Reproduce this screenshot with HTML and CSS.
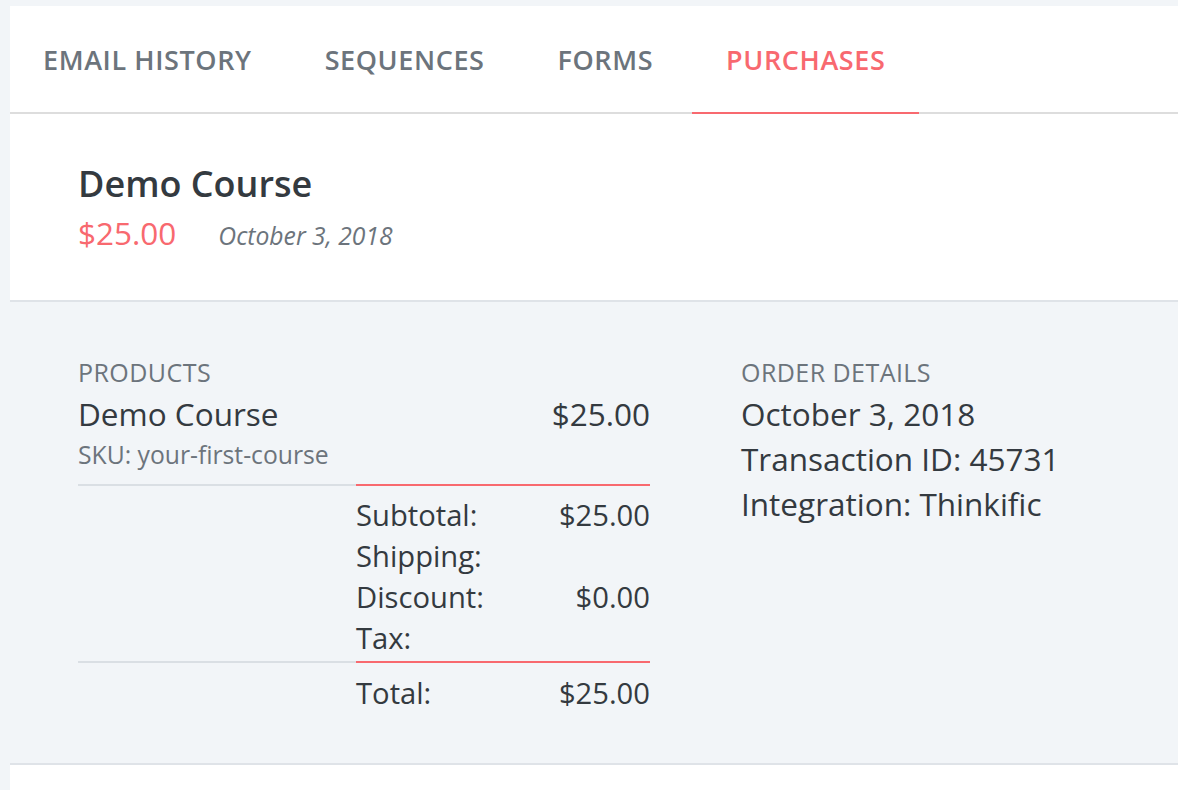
FILE: index.html
```html
<!DOCTYPE html>
<html lang="en">
<head>
<meta charset="utf-8">
<title>Purchases</title>
<link rel="stylesheet" href="styles.css">
</head>
<body>
<div class="page">
  <div class="card">
    <nav class="tabs">
      <a class="tab">EMAIL HISTORY</a>
      <a class="tab">SEQUENCES</a>
      <a class="tab">FORMS</a>
      <a class="tab active">PURCHASES</a>
    </nav>
    <header class="purchase-head">
      <h1 class="title">Demo Course</h1>
      <div class="meta">
        <span class="price">$25.00</span>
        <span class="date">October 3, 2018</span>
      </div>
    </header>
    <section class="details">
      <div class="products">
        <div class="label">PRODUCTS</div>
        <div class="product">
          <div class="product-row">
            <span class="product-name">Demo Course</span>
            <span class="product-price">$25.00</span>
          </div>
          <div class="sku">SKU: your-first-course</div>
        </div>
        <div class="summary">
          <div class="spacer"></div>
          <div class="sums">
            <div class="sum-row"><span>Subtotal:</span><span>$25.00</span></div>
            <div class="sum-row"><span>Shipping:</span><span></span></div>
            <div class="sum-row"><span>Discount:</span><span>$0.00</span></div>
            <div class="sum-row"><span>Tax:</span><span></span></div>
          </div>
        </div>
        <div class="summary total">
          <div class="spacer"></div>
          <div class="sums">
            <div class="sum-row"><span>Total:</span><span>$25.00</span></div>
          </div>
        </div>
      </div>
      <div class="order">
        <div class="label">ORDER DETAILS</div>
        <div class="order-line">October 3, 2018</div>
        <div class="order-line">Transaction ID: 45731</div>
        <div class="order-line">Integration: Thinkific</div>
      </div>
    </section>
    <div class="after"></div>
  </div>
</div>
</body>
</html>
```

FILE: styles.css
```css
html, body {
  margin: 0;
  padding: 0;
  background: #f2f5f8;
  font-family: "Open Sans", "Liberation Sans", sans-serif;
  color: #343a40;
  overflow: hidden;
}

.page {
  padding: 6px 0 0 10px;
}

.card {
  background: #ffffff;
  width: 1200px;
}

.tabs {
  display: flex;
  gap: 5px;
  height: 106px;
  border-bottom: 2px solid #dddddd;
}

.tab {
  display: flex;
  align-items: center;
  padding: 0 34px;
  font-size: 27px;
  font-weight: 600;
  letter-spacing: 0.6px;
  color: #6c747c;
  margin-bottom: -2px;
  border-bottom: 2px solid transparent;
}

.tab:first-child {
  padding-left: 33px;
}

.tab.active {
  color: #f8696f;
  border-bottom-color: #f8696f;
}

.purchase-head {
  padding: 48px 68px 47px;
  border-bottom: 2px solid #dfe3e8;
}

.title {
  margin: 0;
  font-size: 36px;
  line-height: 44px;
  font-weight: 600;
  color: #343a40;
}

.meta {
  display: flex;
  align-items: baseline;
  gap: 42px;
  margin-top: 7px;
  height: 40px;
}

.price {
  font-size: 31.5px;
  line-height: 40px;
  color: #f8696f;
}

.date {
  font-size: 24.7px;
  line-height: 30px;
  font-style: italic;
  color: #6c747c;
}

.details {
  background: #f2f5f8;
  display: flex;
  gap: 91px;
  padding: 54px 68px 47px;
  border-bottom: 2px solid #dfe3e8;
}

.products {
  width: 572px;
}

.label {
  font-size: 25px;
  line-height: 32px;
  color: #6c747c;
  letter-spacing: 0.45px;
}

.product {
  padding-bottom: 13px;
}

.product-row {
  display: flex;
  justify-content: space-between;
  font-size: 31.5px;
  line-height: 44px;
  margin-top: 4px;
}

.sku {
  font-size: 24.7px;
  line-height: 33px;
  margin-top: 2px;
  color: #6c747c;
}

.summary {
  display: flex;
}

.spacer {
  width: 278px;
  border-top: 2px solid #dadfe4;
}

.sums {
  flex: 1;
  border-top: 2px solid #f8696f;
  padding: 9px 0 2px;
}

.total .sums {
  padding-top: 10px;
}

.sum-row {
  display: flex;
  justify-content: space-between;
  font-size: 29.2px;
  line-height: 41px;
}

.order-line {
  font-size: 31.5px;
  line-height: 45px;
}

.order .label {
  margin-bottom: 3px;
}

.after {
  height: 40px;
}
```
